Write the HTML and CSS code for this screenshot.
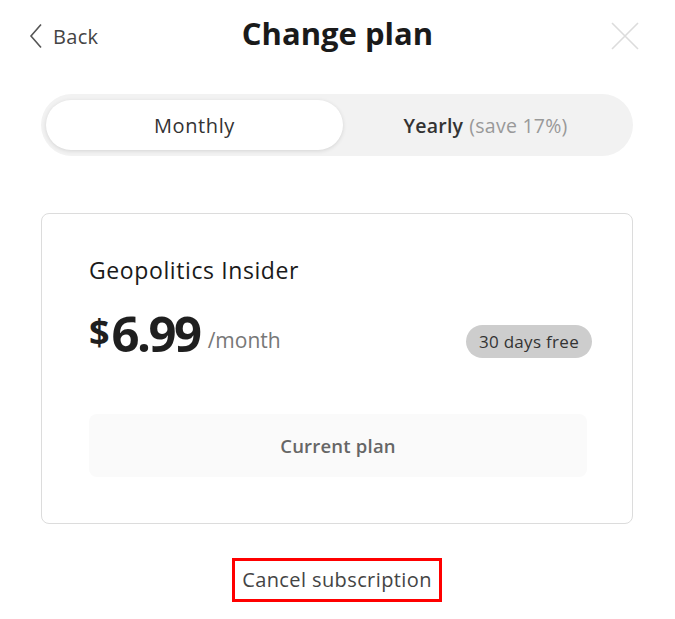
FILE: index.html
```html
<!DOCTYPE html>
<html lang="en">
<head>
<meta charset="utf-8">
<link rel="stylesheet" href="styles.css">
<title>Change plan</title>
</head>
<body>
<div class="page">
  <header class="header">
    <a class="back">
      <svg class="chev" width="14" height="26" viewBox="0 0 14 26"><path d="M12 1.5 L2 13 L12 24.5" fill="none" stroke="#555" stroke-width="1.6"/></svg>
      <span>Back</span>
    </a>
    <h1 class="title">Change plan</h1>
    <div class="close-wrap">
      <svg class="close" width="28" height="28" viewBox="0 0 28 28"><path d="M1 1 L27 27 M27 1 L1 27" fill="none" stroke="#dcdcdc" stroke-width="1.6"/></svg>
    </div>
  </header>

  <div class="toggle">
    <div class="seg active">Monthly</div>
    <div class="seg"><b>Yearly</b> <span class="save">(save 17%)</span></div>
  </div>

  <div class="card">
    <div class="plan-name">Geopolitics Insider</div>
    <div class="price-row">
      <div class="price"><span class="cur">$</span><span class="amt">6.99</span><span class="per">/month</span></div>
      <span class="badge">30 days free</span>
    </div>
    <div class="current">Current plan</div>
  </div>

  <div class="cancel-wrap">
    <a class="cancel">Cancel subscription</a>
  </div>
</div>
</body>
</html>
```
FILE: styles.css
```css
* { box-sizing: border-box; }
html, body { margin: 0; padding: 0; background: #fff; }
body { font-family: "Open Sans", "Noto Sans", sans-serif; color: #1a1a1a; }
.page { width: 675px; padding: 0 42px 0 41px; }
.header { display: grid; grid-template-columns: 1fr auto 1fr; align-items: center; height: 72px; margin-left: -12px; margin-right: -13px; }
.back { display: flex; align-items: center; gap: 10px; font-size: 20px; letter-spacing: 0.3px; color: #444; justify-self: start; }
.chev { display: block; }
.title { margin: 0 0 6px; font-size: 31px; font-weight: 700; color: #1a1a1a; line-height: 40px; }
.close-wrap { justify-self: end; padding-right: 7px; }
.close { display: block; }
.toggle { margin-top: 22px; height: 62px; background: #f2f2f2; border-radius: 31px; padding: 6px 5px; display: flex; }
.seg { flex: 1; display: flex; align-items: center; justify-content: center; font-size: 19.5px; letter-spacing: 0.25px; color: #333; border-radius: 26px; font-weight: 600; }
.seg.active { flex: 0 0 297px; background: #fff; box-shadow: 0 1px 4px rgba(0,0,0,0.12); font-weight: 500; font-size: 20px; letter-spacing: 0.6px; }
.seg b { font-weight: 600; margin-right: 6px; }
.save { color: #999; font-weight: 400; }
.card { margin-top: 57px; border: 1px solid #dcdcdc; border-radius: 8px; padding: 41px 45px 45px 47px; height: 311px; }
.plan-name { font-size: 23px; letter-spacing: 0.6px; color: #1a1a1a; line-height: 30px; }
.price-row { display: flex; align-items: flex-end; justify-content: space-between; margin-top: 22px; margin-right: -5px; }
.price { font-size: 49px; line-height: 52px; white-space: nowrap; color: #1f1f1f; }
.cur { font-size: 36px; font-weight: 700; line-height: 1; vertical-align: 7px; margin-right: 2px; }
.amt { font-weight: 700; letter-spacing: -2.5px; }
.per { font-size: 21px; color: #777; margin-left: 8px; line-height: 1; vertical-align: 4px; }
.badge { background: #cdcdcd; border-radius: 17px; height: 33px; padding: 0 13px; display: flex; align-items: center; font-size: 17px; letter-spacing: 0.3px; color: #333; margin-bottom: 1px; }
.current { margin-top: 55px; height: 63px; background: #fafafa; border-radius: 8px; display: flex; align-items: center; justify-content: center; font-size: 18.5px; letter-spacing: 0.2px; font-weight: 600; color: #666; }
.cancel-wrap { display: flex; justify-content: center; margin-top: 34px; }
.cancel { border: 3px solid #ff0000; padding: 7px 7px; font-size: 20px; letter-spacing: 0.4px; color: #444; font-weight: 500; line-height: 24px; }
```
